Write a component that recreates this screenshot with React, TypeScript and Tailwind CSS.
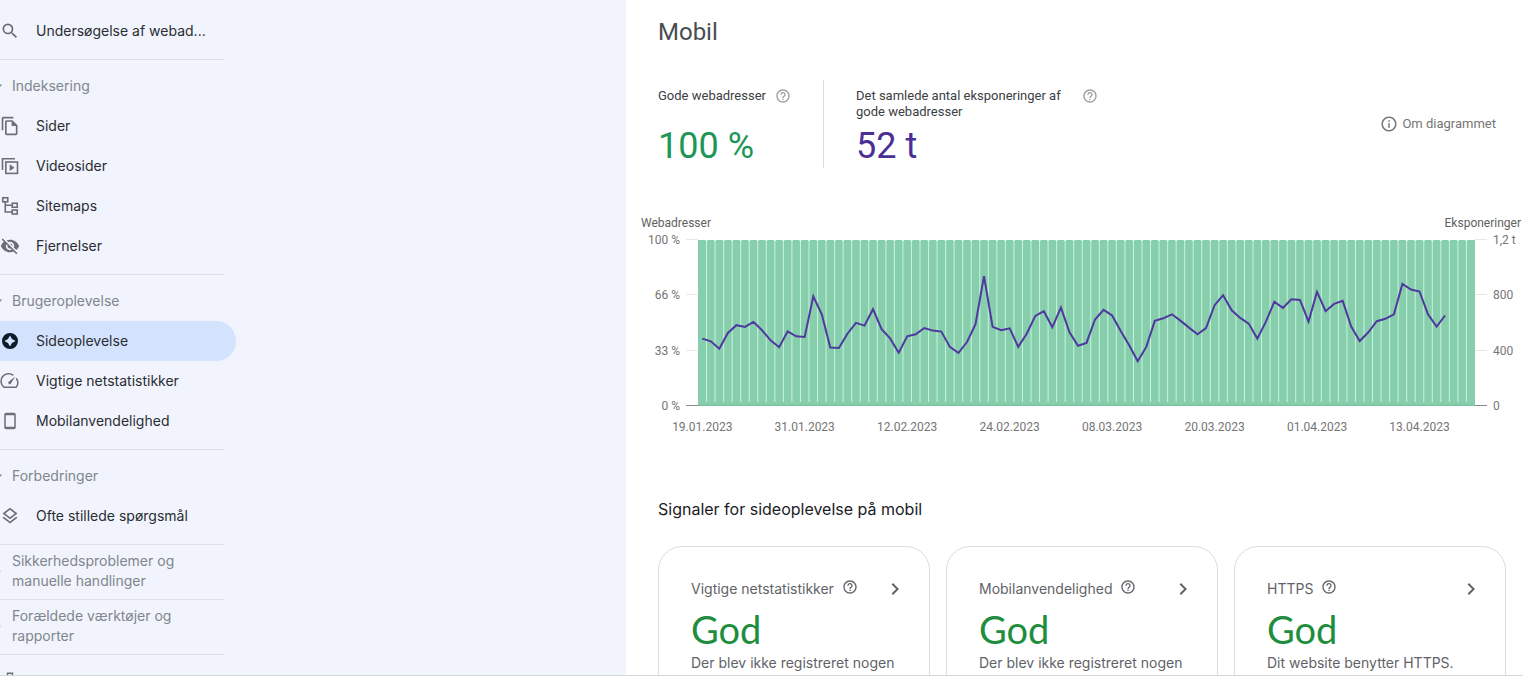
import React from "react";
import {
  MdChevronRight,
  MdHelpOutline,
  MdOutlineFileCopy,
  MdOutlineInfo,
  MdOutlineLayers,
  MdSearch,
  MdVisibilityOff,
} from "react-icons/md";

const iconClass = "w-5 h-5 shrink-0";

const VideoPagesIcon = () => (
  <svg className={iconClass} viewBox="0 0 20 20" fill="none" stroke="currentColor" strokeWidth="1.6">
    <path d="M2.5 14V2.8H15" />
    <rect x="5.8" y="6" width="11.7" height="11.4" />
    <path d="M9.7 8.3v6.8l4.8-3.4z" fill="currentColor" stroke="none" />
  </svg>
);

const SitemapIcon = () => (
  <svg className={iconClass} viewBox="0 0 20 20" fill="none" stroke="currentColor" strokeWidth="1.6">
    <rect x="2.75" y="1.75" width="5" height="4" />
    <rect x="12.25" y="7.25" width="5" height="4" />
    <rect x="12.25" y="14" width="5" height="4" />
    <path d="M5.25 6v10H12M5.25 9.25H12" />
  </svg>
);

const ExperienceIcon = () => (
  <svg className={`${iconClass} text-[#0d1b26]`} viewBox="0 0 20 20" fill="currentColor">
    <path
      fillRule="evenodd"
      d="M10 2a8 8 0 1 0 0 16 8 8 0 0 0 0-16zm0 2.4 2 3.6 3.6 2-3.6 2-2 3.6-2-3.6L4.4 10 8 8z"
    />
  </svg>
);

const GaugeIcon = () => (
  <svg className={iconClass} viewBox="0 0 20 20" fill="none" stroke="currentColor" strokeWidth="1.5">
    <path d="M13.3 4.3A7.2 7.2 0 0 0 3.9 16.2H16.1A7.2 7.2 0 0 0 16.2 7.3" />
    <path d="M15.3 5.6 9 10.5a1.4 1.4 0 1 0 1.9 1.9z" fill="currentColor" stroke="none" />
  </svg>
);

const PhoneIcon = () => (
  <svg className={iconClass} viewBox="0 0 20 20" fill="none" stroke="currentColor" strokeWidth="1.5">
    <rect x="5" y="2.5" width="10" height="15" rx="1" />
    <path d="M5 3.5h10M5 16.5h10" />
  </svg>
);

const FeedbackIcon = () => (
  <svg className={iconClass} viewBox="0 0 20 20" fill="none" stroke="currentColor" strokeWidth="1.5">
    <path d="M7.5 5V2.2h5V5M3 5h14v12H3z" />
  </svg>
);

interface NavItemProps {
  icon: React.ReactNode;
  label: string;
  active?: boolean;
}

const NavItem: React.FC<NavItemProps> = ({ icon, label, active }) => (
  <a
    href="#"
    className={`flex items-center gap-4 h-10 text-[#6b6f74] ${
      active ? "w-[236px] rounded-r-full bg-[#d3e2fd]" : "w-56"
    }`}
  >
    {icon}
    <span className="text-[#2a2d31] whitespace-nowrap">{label}</span>
  </a>
);

interface NavSectionProps {
  title: string;
  open?: boolean;
  children?: React.ReactNode;
}

const NavSection: React.FC<NavSectionProps> = ({ title, open, children }) => (
  <div className="w-56 pt-1.5 pb-2 border-b border-[#dadfe8]">
    <button className="flex items-center gap-2 w-full min-h-10 text-left text-[#80868b]">
      <svg className="w-1 h-2 shrink-0" viewBox="0 0 4 8" fill="currentColor">
        {open ? <path d="M0 2.5h2.2L0 5z" /> : <path d="M0 3.5l.6.6L0 4.7z" />}
      </svg>
      <span className="leading-5">{title}</span>
    </button>
    {children}
  </div>
);

const Sidebar = () => (
  <nav className="w-[626px] shrink-0 bg-[#f1f4fd] overflow-hidden font-[Inter,sans-serif] text-sm">
    <div className="w-56 pt-[11px] pb-2 border-b border-[#dadfe8]">
      <NavItem icon={<MdSearch className={iconClass} />} label="Undersøgelse af webad..." />
    </div>
    <NavSection title="Indeksering" open>
      <NavItem icon={<MdOutlineFileCopy className={iconClass} />} label="Sider" />
      <NavItem icon={<VideoPagesIcon />} label="Videosider" />
      <NavItem icon={<SitemapIcon />} label="Sitemaps" />
      <NavItem icon={<MdVisibilityOff className={iconClass} />} label="Fjernelser" />
    </NavSection>
    <NavSection title="Brugeroplevelse" open>
      <NavItem icon={<ExperienceIcon />} label="Sideoplevelse" active />
      <NavItem icon={<GaugeIcon />} label="Vigtige netstatistikker" />
      <NavItem icon={<PhoneIcon />} label="Mobilanvendelighed" />
    </NavSection>
    <NavSection title="Forbedringer" open>
      <NavItem icon={<MdOutlineLayers className={iconClass} />} label="Ofte stillede spørgsmål" />
    </NavSection>
    <NavSection title="Sikkerhedsproblemer og manuelle handlinger" />
    <NavSection title="Forældede værktøjer og rapporter" />
    <a href="#" aria-label="Feedback" className="block pt-4 text-[#6b6f74]">
      <FeedbackIcon />
    </a>
  </nav>
);

const impressions = [
  487, 468, 414, 528, 584, 572, 608, 547, 475, 424, 540, 504, 499, 792, 663, 422, 419, 523, 601, 581,
  700, 555, 489, 385, 504, 518, 564, 545, 538, 427, 383, 463, 591, 939, 572, 547, 562, 427, 523, 651,
  685, 569, 712, 535, 436, 456, 625, 695, 654, 543, 439, 323, 427, 615, 634, 663, 617, 567, 518, 564,
  729, 801, 692, 637, 596, 487, 608, 753, 709, 772, 767, 610, 825, 685, 738, 760, 574, 470, 533, 613,
  630, 663, 883, 842, 828, 663, 574, 654,
];

const dates = [
  "19.01.2023",
  "31.01.2023",
  "12.02.2023",
  "24.02.2023",
  "08.03.2023",
  "20.03.2023",
  "01.04.2023",
  "13.04.2023",
];

const rows = [
  { left: "100 %", right: "1,2 t" },
  { left: "66 %", right: "800" },
  { left: "33 %", right: "400" },
  { left: "0 %", right: "0" },
];

const DAYS = 91;
const LEFT = 72;
const WIDTH = 777;
const TOP = 30;
const HEIGHT = 166;
const STEP = WIDTH / DAYS;

const dayX = (day: number) => LEFT + STEP * (day + 0.5);
const valueY = (value: number) => TOP + HEIGHT - (value / 1200) * HEIGHT;

const Chart = () => {
  const line = impressions.map((v, i) => `${dayX(i).toFixed(1)},${valueY(v).toFixed(1)}`).join(" ");

  return (
    <svg className="block w-full mt-[42px] font-[Roboto,sans-serif] text-xs" viewBox="0 0 897 230">
      <g fill="#616161">
        <text x="15" y="17">Webadresser</text>
        <text x="895" y="17" textAnchor="end">Eksponeringer</text>
      </g>
      {rows.map((row, i) => {
        const y = TOP + (HEIGHT / 3) * i;
        return (
          <g key={row.left} fill="#757575">
            <path
              d={`M60 ${Math.round(y) - 0.5}h12M849 ${Math.round(y) - 0.5}h12`}
              stroke={i === 3 ? "#8a8a8a" : "#e8e8e8"}
            />
            <text x="54" y={y + 4} textAnchor="end">{row.left}</text>
            <text x="867" y={y + 4}>{row.right}</text>
          </g>
        );
      })}
      <rect x={LEFT} y={TOP} width={WIDTH} height={HEIGHT} fill="#87cfac" />
      {Array.from({ length: DAYS - 1 }, (_, i) => (
        <g key={i}>
          <rect x={LEFT + STEP * (i + 1) - 0.5} y={TOP} width="1" height={HEIGHT - 4} fill="#c8f3dc" />
          <rect x={LEFT + STEP * (i + 1) - 1} y={TOP} width="2" height="1" fill="#e3f8ec" />
        </g>
      ))}
      <path d={`M${LEFT} ${TOP + HEIGHT - 0.5}h${WIDTH}`} stroke="#79bd9c" />
      <polyline points={line} fill="none" stroke="#4f389f" strokeWidth="2" />
      <g fill="#757575" textAnchor="middle">
        {dates.map((date, i) => (
          <text key={date} x={dayX(i * 12)} y="221">{date}</text>
        ))}
      </g>
    </svg>
  );
};

interface ScoreProps {
  label: string;
  value: string;
  className: string;
  labelClass?: string;
}

const Score: React.FC<ScoreProps> = ({ label, value, className, labelClass }) => (
  <div className={`flex flex-col justify-between h-[88px] pt-2 ${className}`}>
    <div className="flex items-start text-[13px] leading-4 text-[#3c4043]">
      <span className={labelClass}>{label}</span>
      <button aria-label="Hjælp" className="text-[#9e9e9e]">
        <MdHelpOutline className="w-4 h-4" />
      </button>
    </div>
    <div className="text-4xl leading-[44px]">{value}</div>
  </div>
);

interface SignalCardProps {
  title: string;
  text: string;
}

const SignalCard: React.FC<SignalCardProps> = ({ title, text }) => (
  <section className="flex-1 h-64 border border-[#dadce0] rounded-3xl pl-8 pr-[22px] pt-[30px] text-sm text-[#5f6368]">
    <div className="flex items-center h-6">
      <h3>{title}</h3>
      <button aria-label="Hjælp" className="ml-2 mb-1">
        <MdHelpOutline className="w-4 h-4" />
      </button>
      <button aria-label="Åbn" className="ml-auto">
        <MdChevronRight className="w-6 h-6" />
      </button>
    </div>
    <div className="mt-1.5 font-[Lato,sans-serif] text-[38px] leading-[44px] text-[#1e8e3e]">God</div>
    <p className="mt-0.5 leading-5">{text}</p>
  </section>
);

export default function App() {
  return (
    <div className="flex flex-col h-screen bg-white">
      <div className="flex flex-1 min-h-0 overflow-hidden">
        <Sidebar />
        <main className="flex-1 min-w-0 overflow-hidden font-[Roboto,sans-serif]">
          <h1 className="pl-8 pt-4 text-2xl leading-8 text-[#4a4d51]">Mobil</h1>
          <div className="flex items-center justify-between mt-8 pl-8 pr-[27px]">
            <div className="flex">
              <Score
                label="Gode webadresser"
                value="100 %"
                labelClass="w-[117px]"
                className="w-[166px] border-r border-[#dadce0] text-[#1e9655]"
              />
              <Score
                label="Det samlede antal eksponeringer af gode webadresser"
                value="52 t"
                labelClass="w-[226px]"
                className="pl-8 text-[#4b2f95]"
              />
            </div>
            <button className="flex items-center gap-1 text-[13px] text-[#757575]">
              <MdOutlineInfo className="w-[18px] h-[18px]" />
              Om diagrammet
            </button>
          </div>
          <Chart />
          <div className="pl-8 pr-[17px] font-[Inter,sans-serif]">
            <h2 className="mt-[57px] text-base leading-6 text-[#202124]">
              Signaler for sideoplevelse på mobil
            </h2>
            <div className="flex gap-4 mt-[25px]">
              <SignalCard title="Vigtige netstatistikker" text="Der blev ikke registreret nogen" />
              <SignalCard title="Mobilanvendelighed" text="Der blev ikke registreret nogen" />
              <SignalCard title="HTTPS" text="Dit website benytter HTTPS." />
            </div>
          </div>
        </main>
      </div>
      <footer className="h-[7px] border-t border-[#d5d7db]" />
    </div>
  );
}
